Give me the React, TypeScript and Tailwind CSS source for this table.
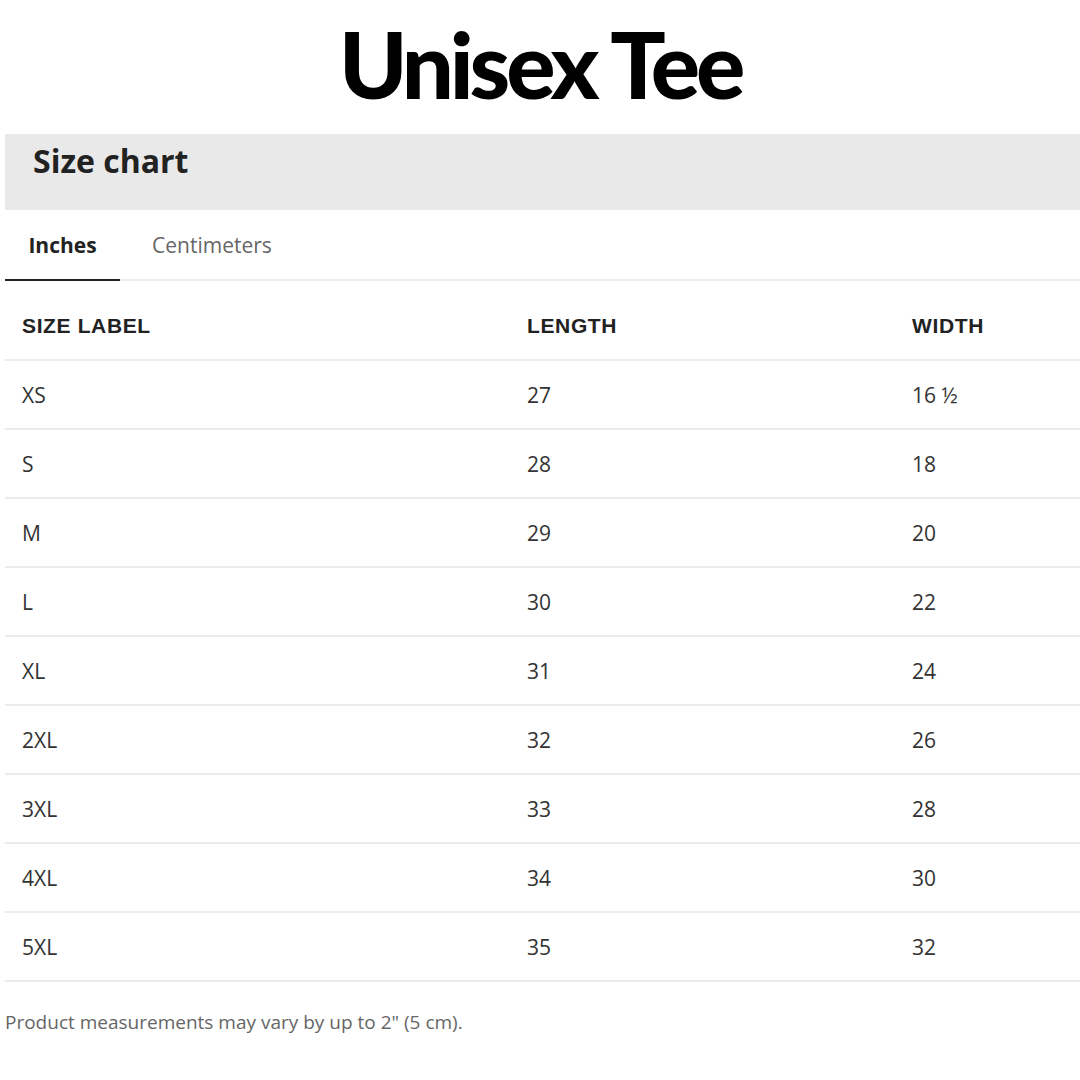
const ROWS: [string, string, string][] = [
  ["XS", "27", "16 ½"],
  ["S", "28", "18"],
  ["M", "29", "20"],
  ["L", "30", "22"],
  ["XL", "31", "24"],
  ["2XL", "32", "26"],
  ["3XL", "33", "28"],
  ["4XL", "34", "30"],
  ["5XL", "35", "32"],
];

const App: React.FC = () => (
  <div className="w-[1080px] h-[1080px] bg-white overflow-hidden font-['Open_Sans',sans-serif] text-[#333]">
    {/* Title */}
    <h1 className="h-[134px] pt-[14px] text-center font-['Lato',sans-serif] text-[92px] leading-[100px] font-black tracking-[-0.045em] text-black">
      Unisex Tee
    </h1>

    <div className="pl-[5px]">
      {/* Size chart banner */}
      <div className="h-[76px] bg-[#e9e9e9] pl-[28px] pt-[8px]">
        <h2 className="text-[32px] leading-[38px] font-bold text-[#222]">Size chart</h2>
      </div>

      {/* Tabs */}
      <div className="flex h-[71px] border-b-2 border-[#ececec] text-[21px]">
        <div className="w-[115px] flex items-center justify-center pt-[3px] border-b-2 border-[#222] -mb-[2px] font-bold text-[#222]">
          Inches
        </div>
        <div className="flex items-center pl-[32px] pt-[3px] text-[#666]">Centimeters</div>
      </div>

      {/* Table header */}
      <div className="flex h-[80px] items-center pt-[12px] border-b-2 border-[#ececec] font-['Liberation_Sans',sans-serif] font-bold text-[21px] tracking-[0.03em] text-[#222]">
        <div className="w-[522px] pl-[17px]">SIZE LABEL</div>
        <div className="w-[385px]">LENGTH</div>
        <div>WIDTH</div>
      </div>

      {/* Rows */}
      {ROWS.map(([size, length, width]) => (
        <div
          key={size}
          className="flex h-[69px] items-center pt-[3px] border-b-2 border-[#ececec] text-[21px] text-[#333]"
        >
          <div className="w-[522px] pl-[17px]">{size}</div>
          <div className="w-[385px]">{length}</div>
          <div>{width}</div>
        </div>
      ))}

      <p className="mt-[26px] text-[19px] text-[#666]">
        Product measurements may vary by up to 2" (5 cm).
      </p>
    </div>
  </div>
);

export default App;
